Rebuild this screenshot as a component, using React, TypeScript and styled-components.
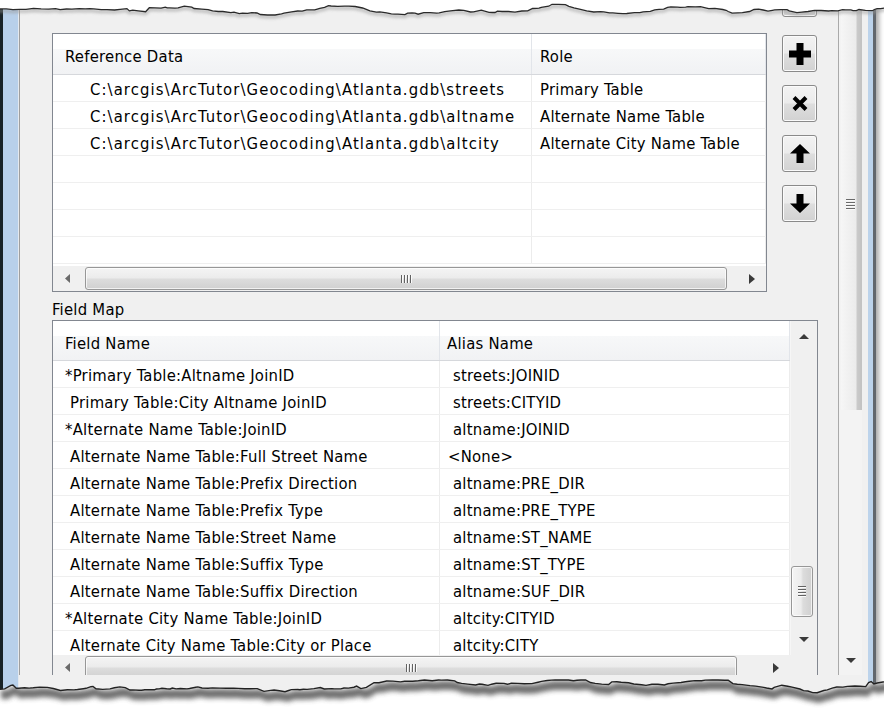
import React from "react";
import styled, { createGlobalStyle } from "styled-components";

const FONT = `"DejaVu Sans Condensed", "DejaVu Sans", sans-serif`;

const GlobalStyle = createGlobalStyle`
  html, body { margin: 0; padding: 0; background: #ffffff; }
  body { font-family: ${FONT}; font-size: 16.5px; letter-spacing: 0.25px; color: #000; }
  * { box-sizing: border-box; }
`;

/* ---------- torn edge geometry ---------- */
type Pt = [number, number];
function tornLine(seed: number, x0: number, x1: number, base: number, amp: number): Pt[] {
  let s = seed;
  const rnd = () => {
    s = (s * 16807) % 2147483647;
    return s / 2147483647;
  };
  const pts: Pt[] = [];
  let x = x0;
  let y = base;
  let drift = 0;
  while (x < x1) {
    pts.push([x, +y.toFixed(1)]);
    x += 2 + rnd() * 6;
    drift += (rnd() - 0.5) * 1.2;
    drift *= 0.8;
    y += drift + (rnd() - 0.5) * 2.2 + (base - y) * 0.08;
    if (rnd() < 0.12) y += (rnd() - 0.5) * 6;
    y = Math.max(base - amp, Math.min(base + amp, y));
  }
  pts.push([x1, +y.toFixed(1)]);
  return pts;
}
const toPath = (pts: Pt[], dx = 0, dy = 0) =>
  pts.map(([x, y], i) => `${i ? "L" : "M"}${(x + dx).toFixed(1)} ${(y + dy).toFixed(1)}`).join(" ");
const toPathRev = (pts: Pt[], dx = 0, dy = 0) =>
  [...pts].reverse().map(([x, y]) => `L${(x + dx).toFixed(1)} ${(y + dy).toFixed(1)}`).join(" ");

const topPts = tornLine(7, -2, 886, 9, 6);
const topLine = toPath(topPts);
const topFill = `M-2 -2 L886 -2 ${toPathRev(topPts)} Z`;

const botPts = tornLine(29, -2, 886, 26, 8); // local coords (svg top = 662)
const botLine = toPath(botPts);
const botFill = `${toPath(botPts)} L886 60 L-2 60 Z`;
const botShadow = `${toPath(botPts, 3, 1)} ${toPathRev(botPts, 3, 10)} Z`;

/* ---------- page frame ---------- */
const Stage = styled.div`
  position: relative;
  width: 884px;
  height: 720px;
  overflow: hidden;
  background: #fff;
`;

const Window = styled.div`
  display: flex;
  width: 876px;
  height: 696px;
  box-shadow: 3px 1px 5px rgba(0, 0, 0, 0.35);
`;

const LeftEdge = styled.div`
  flex: none;
  width: 19px;
  background: linear-gradient(to right, #182226 0 3px, #b8d0ea 3px 18px, #e4e9ef 18px 19px);
`;

const RightEdge = styled.div`
  flex: none;
  width: 14px;
  background: linear-gradient(to right, #f0f0f0 0 6px, #bcd3eb 6px 11px, #62676d 11px 14px);
`;

const Middle = styled.div`
  flex: none;
  width: 843px;
  display: flex;
  flex-direction: column;
  background: #f0f0f0;
`;

const Viewport = styled.div`
  display: flex;
  height: 675px;
  border-left: 1px solid #9f9f9f;
  overflow: hidden;
`;

const Content = styled.div`
  flex: none;
  width: 818px;
  height: 675px;
  display: flex;
  flex-direction: column;
  padding: 0 21px 0 32px;
  overflow: hidden;
`;

const TopRow = styled.div`
  display: flex;
  align-items: flex-start;
  gap: 15px;
`;

const SectionLabel = styled.div`
  margin-top: 8px;
  height: 20px;
  line-height: 20px;
  white-space: nowrap;
`;

/* ---------- list view ---------- */
const ListFrame = styled.div<{ $w: number; $h: number; $top: number; $vscroll?: boolean }>`
  flex: none;
  width: ${(p) => p.$w}px;
  height: ${(p) => p.$h}px;
  margin-top: ${(p) => p.$top}px;
  border: 1px solid #828790;
  background: #fff;
  display: grid;
  grid-template-columns: ${(p) => (p.$vscroll ? "1fr 27px" : "1fr")};
  grid-template-rows: 1fr 25px;
  overflow: hidden;
`;

const ListBody = styled.div`
  overflow: hidden;
  display: flex;
  flex-direction: column;
`;

const HeaderRow = styled.div<{ $cols: string; $h: number }>`
  flex: none;
  display: grid;
  grid-template-columns: ${(p) => p.$cols};
  height: ${(p) => p.$h}px;
  background: linear-gradient(to bottom, #ffffff 0 15px, #f7f8f9 15px, #f1f2f4 100%);
  border-bottom: 1px solid #d6d8dc;
`;

const HeaderCell = styled.div<{ $pad: number }>`
  display: flex;
  align-items: center;
  padding: 5px 0 0 ${(p) => p.$pad}px;
  border-right: 1px solid #e2e5ea;
  white-space: nowrap;
  overflow: hidden;
`;

const DataRow = styled.div<{ $cols: string }>`
  flex: none;
  display: grid;
  grid-template-columns: ${(p) => p.$cols};
  height: 27px;
  border-bottom: 1px solid #efefef;
`;

const Cell = styled.div<{ $pad: number; $track?: number }>`
  display: flex;
  align-items: center;
  padding: 2px 0 0 ${(p) => p.$pad}px;
  border-right: 1px solid #ececec;
  white-space: nowrap;
  overflow: hidden;
  letter-spacing: ${(p) => p.$track ?? 0.25}px;
`;

/* ---------- scroll bars ---------- */
const HScroll = styled.div`
  display: flex;
  height: 25px;
  background: #f0f0f0;
`;

const ArrowCell = styled.div<{ $w: number; $h: number }>`
  flex: none;
  width: ${(p) => p.$w}px;
  height: ${(p) => p.$h}px;
  display: flex;
  align-items: center;
  justify-content: center;
`;

const HTrack = styled.div`
  flex: 1;
  display: flex;
  align-items: center;
`;

const HThumb = styled.div<{ $start: number; $size: number }>`
  flex: none;
  margin-left: ${(p) => p.$start}px;
  width: ${(p) => p.$size}px;
  height: 23px;
  border: 1px solid #979797;
  border-radius: 3px;
  background: linear-gradient(to bottom, #f4f4f4 0%, #ececec 45%, #dcdcdc 55%, #d0d0d0 100%);
  box-shadow: inset 0 0 0 1px rgba(255, 255, 255, 0.7);
  display: flex;
  align-items: center;
  justify-content: center;
`;

const HGrip = styled.span`
  width: 11px;
  height: 8px;
  background: repeating-linear-gradient(to right, #626262 0 1px, #fbfbfb 1px 2px, transparent 2px 3px);
`;

const VScroll = styled.div`
  grid-row: 1;
  grid-column: 2;
  display: flex;
  flex-direction: column;
  background: #f0f0f0;
  border-left: 1px solid #f6f6f6;
`;

const VTrack = styled.div`
  flex: 1;
  display: flex;
  flex-direction: column;
`;

const VThumb = styled.div<{ $start: number; $size: number; $w: number }>`
  flex: none;
  margin-top: ${(p) => p.$start}px;
  height: ${(p) => p.$size}px;
  width: ${(p) => p.$w}px;
  border: 1px solid #979797;
  border-radius: 3px;
  background: linear-gradient(to right, #f4f4f4 0%, #ececec 45%, #dcdcdc 55%, #d0d0d0 100%);
  box-shadow: inset 0 0 0 1px rgba(255, 255, 255, 0.7);
  display: flex;
  align-items: center;
  justify-content: center;
`;

const VGrip = styled.span`
  width: 8px;
  height: 11px;
  background: repeating-linear-gradient(to bottom, #626262 0 1px, #fbfbfb 1px 2px, transparent 2px 3px);
`;

const Corner = styled.div`
  background: #f0f0f0;
`;

const OuterScroll = styled.div`
  flex: none;
  width: 24px;
  display: flex;
  flex-direction: column;
  border-left: 1px solid #a9a9a9;
  background: #f3f3f3;
`;

const OuterThumb = styled.div<{ $size: number }>`
  flex: none;
  height: ${(p) => p.$size}px;
  margin-left: 2px;
  background: linear-gradient(to right, #f6f6f6 0%, #ebebeb 70%, #c9c9c9 78%, #c2c2c2 100%);
  display: flex;
  align-items: flex-end;
  justify-content: center;
  padding-bottom: 200px;
`;

const OuterGrip = styled.span`
  width: 9px;
  height: 11px;
  margin-right: 3px;
  background: repeating-linear-gradient(to bottom, #6a6a6a 0 1px, #fbfbfb 1px 2px, transparent 2px 3px);
`;

const Spacer = styled.div`
  flex: 1;
`;

/* ---------- tool buttons ---------- */
const ButtonColumn = styled.div`
  flex: none;
  display: flex;
  flex-direction: column;
  gap: 13px;
  margin-top: -19px;
`;

const ToolButton = styled.div<{ $h: number; $after?: number }>`
  width: 35px;
  height: ${(p) => p.$h}px;
  margin-bottom: ${(p) => p.$after ?? 0}px;
  border: 1px solid #8a8a8a;
  border-radius: 3px;
  background: linear-gradient(to bottom, #f3f3f3 0%, #ebebeb 48%, #dedede 52%, #d2d2d2 100%);
  box-shadow: inset 0 0 0 1px #fbfbfb;
  display: flex;
  align-items: center;
  justify-content: center;
`;

const StubButton = styled(ToolButton)`
  align-items: flex-end;
  padding-bottom: 4px;
`;

/* ---------- overlays (torn paper edges) ---------- */
const TopTear = styled.svg`
  position: absolute;
  left: 0;
  top: 0;
  pointer-events: none;
`;

const BottomTear = styled.svg`
  position: absolute;
  left: 0;
  top: 662px;
  pointer-events: none;
`;

/* ---------- icons ---------- */
function Tri({ dir, color = "#404040" }: { dir: "l" | "r" | "u" | "d"; color?: string }) {
  if (dir === "l")
    return (
      <svg width="5" height="9" viewBox="0 0 5 9">
        <polygon points="5,0 0,4.5 5,9" fill={color} />
      </svg>
    );
  if (dir === "r")
    return (
      <svg width="6" height="10" viewBox="0 0 6 10">
        <polygon points="0,0 6,5 0,10" fill={color} />
      </svg>
    );
  if (dir === "u")
    return (
      <svg width="10" height="5" viewBox="0 0 10 5">
        <polygon points="0,5 5,0 10,5" fill={color} />
      </svg>
    );
  return (
    <svg width="10" height="5" viewBox="0 0 10 5">
      <polygon points="0,0 10,0 5,5" fill={color} />
    </svg>
  );
}

const PlusIcon = () => (
  <svg width="22" height="22" viewBox="0 0 22 22">
    <path d="M7.5 0h7v7.5H22v7h-7.5V22h-7v-7.5H0v-7h7.5z" fill="#000" />
  </svg>
);
const CrossIcon = () => (
  <svg width="16" height="15" viewBox="0 0 16 15">
    <path d="M2 1.5 L14 13.5 M14 1.5 L2 13.5" stroke="#000" strokeWidth="4" />
  </svg>
);
const UpIcon = () => (
  <svg width="20" height="19" viewBox="0 0 20 19">
    <polygon points="10,0 20,9.5 13.5,9.5 13.5,19 6.5,19 6.5,9.5 0,9.5" fill="#000" />
  </svg>
);
const DownIcon = () => (
  <svg width="20" height="19" viewBox="0 0 20 19">
    <polygon points="10,19 20,9.5 13.5,9.5 13.5,0 6.5,0 6.5,9.5 0,9.5" fill="#000" />
  </svg>
);
const FolderIcon = () => (
  <svg width="18" height="14" viewBox="0 0 18 14">
    <path d="M1 3h6l2 2h8v8H1z" fill="#e8c14a" stroke="#b08a1e" strokeWidth="1" />
  </svg>
);

/* ---------- data ---------- */
const refRows: [string, string][] = [
  ["C:\\arcgis\\ArcTutor\\Geocoding\\Atlanta.gdb\\streets", "Primary Table"],
  ["C:\\arcgis\\ArcTutor\\Geocoding\\Atlanta.gdb\\altname", "Alternate Name Table"],
  ["C:\\arcgis\\ArcTutor\\Geocoding\\Atlanta.gdb\\altcity", "Alternate City Name Table"],
  ["", ""],
  ["", ""],
  ["", ""],
  ["", ""],
];

type FieldRow = { name: string; star?: boolean; alias: string; none?: boolean };
const fieldRows: FieldRow[] = [
  { name: "*Primary Table:Altname JoinID", star: true, alias: "streets:JOINID" },
  { name: "Primary Table:City Altname JoinID", alias: "streets:CITYID" },
  { name: "*Alternate Name Table:JoinID", star: true, alias: "altname:JOINID" },
  { name: "Alternate Name Table:Full Street Name", alias: "<None>", none: true },
  { name: "Alternate Name Table:Prefix Direction", alias: "altname:PRE_DIR" },
  { name: "Alternate Name Table:Prefix Type", alias: "altname:PRE_TYPE" },
  { name: "Alternate Name Table:Street Name", alias: "altname:ST_NAME" },
  { name: "Alternate Name Table:Suffix Type", alias: "altname:ST_TYPE" },
  { name: "Alternate Name Table:Suffix Direction", alias: "altname:SUF_DIR" },
  { name: "*Alternate City Name Table:JoinID", star: true, alias: "altcity:CITYID" },
  { name: "Alternate City Name Table:City or Place", alias: "altcity:CITY" },
  { name: "", alias: "" },
];

const REF_COLS = "479px 1fr";
const FIELD_COLS = "387px 1fr";

export default function App() {
  return (
    <>
      <GlobalStyle />
      <Stage>
        <Window>
          <LeftEdge />
          <Middle>
            <Viewport>
              <Content>
                <TopRow>
                  <ListFrame $w={715} $h={259} $top={33}>
                    <ListBody>
                      <HeaderRow $cols={REF_COLS} $h={41}>
                        <HeaderCell $pad={12}>Reference Data</HeaderCell>
                        <HeaderCell $pad={8}>Role</HeaderCell>
                      </HeaderRow>
                      {refRows.map(([path, role], i) => (
                        <DataRow key={i} $cols={REF_COLS}>
                          <Cell $pad={37} $track={1.1}>{path}</Cell>
                          <Cell $pad={8}>{role}</Cell>
                        </DataRow>
                      ))}
                    </ListBody>
                    <HScroll>
                      <ArrowCell $w={28} $h={25}>
                        <Tri dir="l" color="#6a6a6a" />
                      </ArrowCell>
                      <HTrack>
                        <HThumb $start={4} $size={642}>
                          <HGrip />
                        </HThumb>
                      </HTrack>
                      <ArrowCell $w={28} $h={25}>
                        <Tri dir="r" color="#3a3a3a" />
                      </ArrowCell>
                    </HScroll>
                  </ListFrame>
                  <ButtonColumn>
                    <StubButton $h={36} $after={5}>
                      <FolderIcon />
                    </StubButton>
                    <ToolButton $h={37}>
                      <PlusIcon />
                    </ToolButton>
                    <ToolButton $h={37}>
                      <CrossIcon />
                    </ToolButton>
                    <ToolButton $h={37}>
                      <UpIcon />
                    </ToolButton>
                    <ToolButton $h={37}>
                      <DownIcon />
                    </ToolButton>
                  </ButtonColumn>
                </TopRow>
                <SectionLabel>Field Map</SectionLabel>
                <ListFrame $w={766} $h={361} $top={0} $vscroll>
                  <ListBody>
                    <HeaderRow $cols={FIELD_COLS} $h={40}>
                      <HeaderCell $pad={12}>Field Name</HeaderCell>
                      <HeaderCell $pad={7}>Alias Name</HeaderCell>
                    </HeaderRow>
                    {fieldRows.map((r, i) => (
                      <DataRow key={i} $cols={FIELD_COLS}>
                        <Cell $pad={r.star ? 12 : 17}>{r.name}</Cell>
                        <Cell $pad={r.none ? 8 : 13}>{r.alias}</Cell>
                      </DataRow>
                    ))}
                  </ListBody>
                  <VScroll>
                    <ArrowCell $w={26} $h={31}>
                      <Tri dir="u" color="#3a3a3a" />
                    </ArrowCell>
                    <VTrack>
                      <VThumb $start={214} $size={51} $w={22}>
                        <VGrip />
                      </VThumb>
                    </VTrack>
                    <ArrowCell $w={26} $h={31}>
                      <Tri dir="d" color="#3a3a3a" />
                    </ArrowCell>
                  </VScroll>
                  <HScroll>
                    <ArrowCell $w={28} $h={25}>
                      <Tri dir="l" color="#6a6a6a" />
                    </ArrowCell>
                    <HTrack>
                      <HThumb $start={4} $size={652}>
                        <HGrip />
                      </HThumb>
                    </HTrack>
                    <ArrowCell $w={28} $h={25}>
                      <Tri dir="r" color="#3a3a3a" />
                    </ArrowCell>
                  </HScroll>
                  <Corner />
                </ListFrame>
              </Content>
              <OuterScroll>
                <OuterThumb $size={410}>
                  <OuterGrip />
                </OuterThumb>
                <Spacer />
                <ArrowCell $w={23} $h={30}>
                  <Tri dir="d" color="#3a3a3a" />
                </ArrowCell>
              </OuterScroll>
            </Viewport>
          </Middle>
          <RightEdge />
        </Window>

        <TopTear width="884" height="30" viewBox="0 0 884 30">
          <defs>
            <filter id="tb" x="-5%" y="-50%" width="110%" height="200%">
              <feGaussianBlur stdDeviation="1.5" />
            </filter>
          </defs>
          <path d={toPath(topPts, 0, 2)} stroke="#9a9a9a" strokeWidth="3" fill="none" opacity="0.6" filter="url(#tb)" />
          <path d={topFill} fill="#ffffff" />
          <path d={topLine} stroke="#2a2a2a" strokeWidth="1.3" fill="none" />
        </TopTear>

        <BottomTear width="884" height="58" viewBox="0 0 884 58">
          <defs>
            <filter id="bb" x="-5%" y="-50%" width="110%" height="200%">
              <feGaussianBlur stdDeviation="2.4" />
            </filter>
            <clipPath id="below">
              <path d={botFill} />
            </clipPath>
          </defs>
          <path d={botFill} fill="#ffffff" />
          <g clipPath="url(#below)">
            <path d={botShadow} fill="#3c3c3c" opacity="0.75" filter="url(#bb)" />
          </g>
          <path d={botLine} stroke="#222" strokeWidth="1.4" fill="none" />
        </BottomTear>
      </Stage>
    </>
  );
}
